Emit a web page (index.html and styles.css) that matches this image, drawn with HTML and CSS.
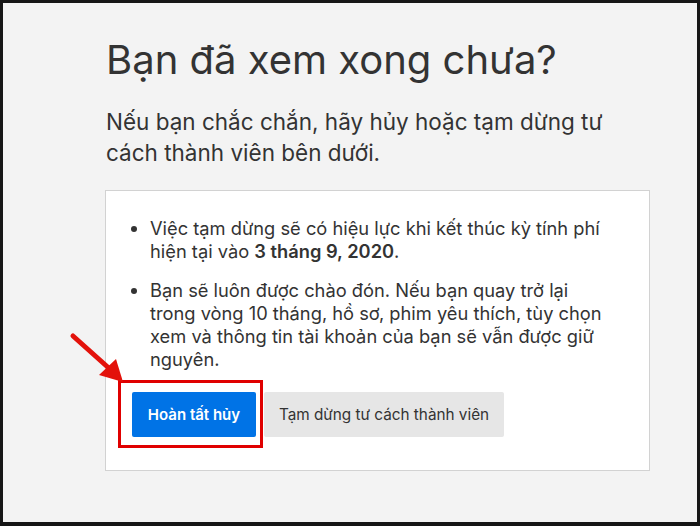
FILE: index.html
```html
<!DOCTYPE html>
<html lang="vi">
<head>
    <meta charset="UTF-8">
    <meta name="viewport" content="width=device-width, initial-scale=1.0">
    <title>Bạn đã xem xong chưa?</title>
    <link rel="stylesheet" href="styles.css">
</head>
<body>
    <div class="frame">
        <div class="content">
            <h1 class="title">Bạn đã xem xong chưa?</h1>
            <p class="subtitle">Nếu bạn chắc chắn, hãy hủy hoặc tạm dừng tư cách thành viên bên dưới.</p>

            <div class="card">
                <ul class="notes">
                    <li>Việc tạm dừng sẽ có hiệu lực khi kết thúc kỳ tính phí hiện tại vào <b>3 tháng 9, 2020</b>.</li>
                    <li>Bạn sẽ luôn được chào đón. Nếu bạn quay trở lại trong vòng 10 tháng, hồ sơ, phim yêu thích, tùy chọn xem và thông tin tài khoản của bạn sẽ vẫn được giữ nguyên.</li>
                </ul>

                <div class="actions">
                    <button class="btn btn-primary">Hoàn tất hủy</button>
                    <button class="btn btn-secondary">Tạm dừng tư cách thành viên</button>

                    <!-- Highlight marker -->
                    <span class="highlight"></span>
                    <svg class="arrow" width="60" height="56" viewBox="0 0 60 56">
                        <line x1="4" y1="4" x2="42" y2="38" stroke="#e3120b" stroke-width="5" stroke-linecap="round"/>
                        <polygon points="54,50 30,43 47,27" fill="#e3120b"/>
                    </svg>
                </div>
            </div>
        </div>
    </div>
</body>
</html>
```

FILE: styles.css
```css
* {
    box-sizing: border-box;
}

body {
    margin: 0;
    background-color: #111;
    font-family: Inter, "Liberation Sans", Arial, sans-serif;
}

.frame {
    width: 700px;
    height: 526px;
    border: 3px solid #161616;
    border-bottom-width: 4px;
    background-color: #f3f3f3;
    overflow: hidden;
}

.content {
    padding: 33px 0 0 102px;
    width: 647px;
}

.title {
    margin: 0 0 0 1px;
    font-size: 40px;
    font-weight: normal;
    color: #333;
    line-height: 48px;
}

.subtitle {
    margin: 22px 0 0 1px;
    font-size: 22.5px;
    line-height: 31px;
    color: #333;
    width: 520px;
}

.card {
    margin-top: 22px;
    background-color: #fff;
    border: 1px solid #d2d2d2;
    padding: 26px 32px 33px 26px;
}

.notes {
    margin: 0;
    padding-left: 18px;
    font-size: 18.3px;
    line-height: 23px;
    color: #333;
}

.notes li {
    margin-bottom: 16px;
}

.notes b {
    font-weight: 600;
}

.actions {
    position: relative;
    display: flex;
    margin-top: 21px;
}

.btn {
    height: 45px;
    border: none;
    border-radius: 2px;
    font-family: inherit;
    white-space: nowrap;
    cursor: pointer;
}

.btn-primary {
    width: 124px;
    background-color: #0073e6;
    color: #fff;
    font-size: 15px;
    font-weight: 600;
}

.btn-secondary {
    margin-left: 8px;
    width: 240px;
    background-color: #e6e6e6;
    color: #333;
    font-size: 15.3px;
}

.highlight {
    position: absolute;
    left: -14px;
    top: -12px;
    width: 145px;
    height: 68px;
    border: 3px solid #e00000;
}

.arrow {
    position: absolute;
    left: -63px;
    top: -60px;
}
```
